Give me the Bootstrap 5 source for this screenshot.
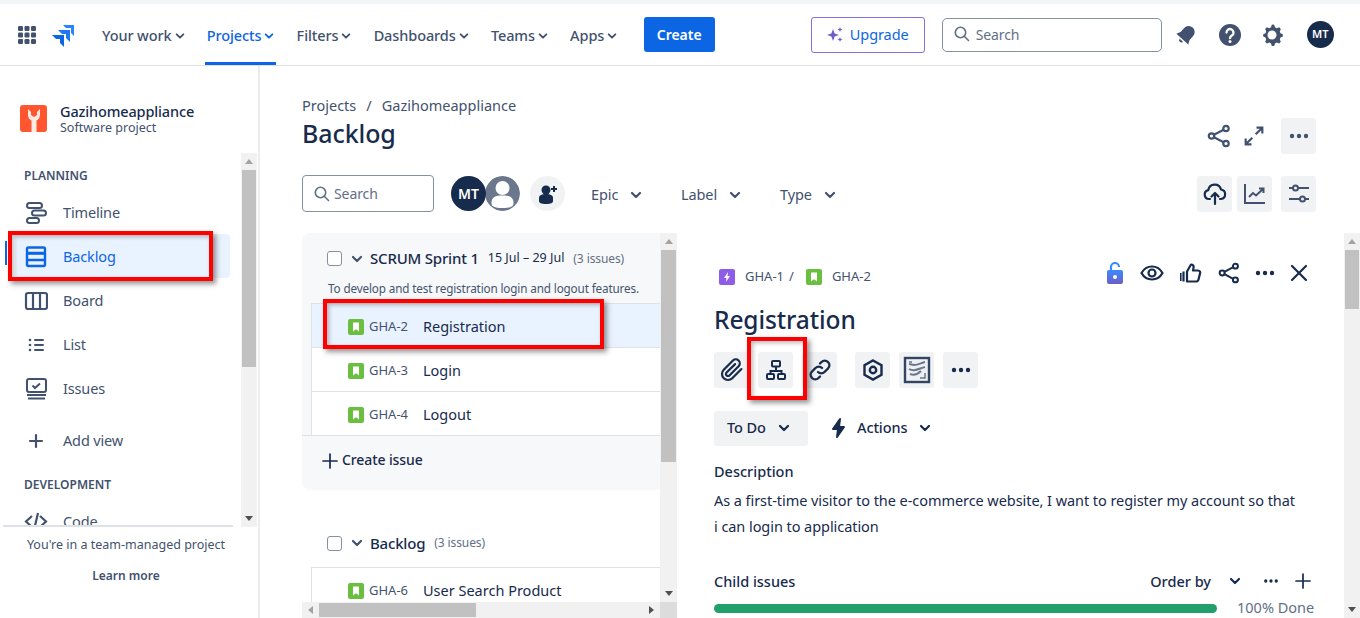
<!DOCTYPE html>
<html lang="en">
<head>
<meta charset="utf-8">
<title>Backlog</title>
<link href="https://cdn.jsdelivr.net/npm/bootstrap@5.3.0/dist/css/bootstrap.min.css" rel="stylesheet">
<style>
html,body{height:618px;overflow:hidden}
body{font-family:"Noto Sans","Open Sans",sans-serif;font-size:14px;color:#172b4d;letter-spacing:-.1px}
svg{display:block;flex:none}
.ico{width:24px;height:24px}
.i18{width:18px;height:18px}
.i12{width:12px;height:12px}
.i10{width:10px;height:10px}
.strip{height:4px;background:#f4f5f7}
.topbar{height:62px;border-bottom:1px solid #dfe1e6;background:#fff;color:#42526e;padding:0}
.t-apps{margin-left:16px}
.t-logo{margin:0 25px 0 13px}
.tnav{height:61px;padding:2px 2px 0;margin-right:18.2px;font-size:14.5px;font-weight:500;color:#42526e;white-space:nowrap;gap:3px;text-decoration:none}
.tnav.on{color:#0c66e4;border-bottom:3px solid #0c66e4;padding-top:5px}
.tcreate{background:#0c66e4;color:#fff;border-radius:3px;width:71px;height:35px;font-size:14px;font-weight:600;margin-left:6.3px;padding:0;border:0}
.tupgrade{width:114px;height:36px;border:1px solid #8270db;border-radius:3px;color:#0c66e4;background:#fff;font-size:14.5px;padding:0;margin-left:96px;gap:7px}
.tsearch{width:220px;height:34px;border:1px solid #8590a2;border-radius:5px;margin-left:17px;padding:0 0 1px 10px;gap:5px;color:#626f86}
.tbell{margin-left:12px}
.thelp{margin-left:20px}
.tgear{margin-left:18px}
.avatar{width:27px;height:27px;border-radius:50%;background:#172b4d;color:#fff;font-size:11px;font-weight:600;letter-spacing:0;margin-left:23px}
.body-wrap{height:552px}
.sidebar{width:260px;border-right:2px solid #ebecf0;flex:none}
.proj{height:87px;padding:36px 0 0 20px;gap:13px}
.proj-ico{width:27px;height:27px;border-radius:3px;background:#ff5630;margin-top:3px;overflow:hidden}
.proj-name{font-size:14.5px;font-weight:500;line-height:18px;letter-spacing:-.15px}
.proj-sub{font-size:12.5px;color:#42526e;line-height:15px;letter-spacing:0}
.side-mid{height:374px}
.side-list{width:241px;position:relative;overflow:hidden}
.side-list::after{content:"";position:absolute;left:3px;width:230px;bottom:0;height:2px;background:#dfe1e6}
.side-h{font-size:12px;font-weight:600;color:#42526e;line-height:16px;padding-left:24px;letter-spacing:0;margin-top:15px;margin-bottom:6px}
.sitem{width:215px;height:44px;margin-left:15px;padding:1px 0 0 9px;gap:15px;color:#42526e;border-radius:4px;position:relative;flex:none;font-size:14.5px;letter-spacing:-.15px}
.sitem.on{background:#e9f2ff;color:#0c66e4}
.sitem.on::before{content:"";position:absolute;left:-10px;top:7px;width:2px;height:24px;background:#0c66e4}
.sitem.gapt{margin-top:8px;margin-bottom:0}
.sb{background:#f1f1f1;flex:none}
.sb-v{width:16px;margin-right:1px}
.sb-up,.sb-down{height:17px;flex:none}
.sb-thumb{background:#c1c1c1;flex:none;margin:0 1px}
.sb-up::before{content:"";border:4px solid transparent;border-top:0;border-bottom:5px solid #a3a3a3}
.sb-down::before{content:"";border:4px solid transparent;border-bottom:0;border-top:5px solid #505050}
.th1{height:197px}.th2{height:212px}.th3{height:59px}
.side-foot{font-size:12.5px;color:#42526e;text-align:center;width:252px;padding-top:9px;letter-spacing:0}
.side-foot b{display:block;font-weight:600;font-size:12px;margin-top:12px}
.crumbs{padding:29px 0 0 42px;height:49px;color:#42526e;font-size:14.5px;line-height:21px;gap:10px;letter-spacing:0}
.title-row{height:38px;padding:0 44px 0 42px}
.ptitle{font-size:25px;font-weight:500;margin:0 0 2px;line-height:36px;letter-spacing:-.1px}
.title-acts{padding-top:4px}
.tile{width:35px;height:36px;background:#f1f2f4;border-radius:3px;color:#172b4d;flex:none}
.tile-s{color:#42526e}
.plain{background:none;color:#42526e}
.m5{margin-right:5px}
.m9{margin-right:9px}
.m10{margin-right:10px}
.filter-row{height:37px;margin-top:22px;padding:0 44px 0 42px}
.fsearch{width:132px;height:37px;border:1px solid #8590a2;border-radius:4px;padding-left:10px;gap:3px;color:#626f86}
.av-b{width:35px;height:35px;border-radius:50%;background:#172b4d;color:#fff;font-weight:600;font-size:14px;margin-left:17px;position:relative;z-index:1;letter-spacing:0}
.av-g{width:35px;height:35px;border-radius:50%;margin-left:-1px}
.av-add{width:35px;height:35px;border-radius:50%;background:#f1f2f4;margin-left:10px}
.fdrop{color:#42526e;font-size:14.5px;gap:12px;white-space:nowrap;padding-top:3px}
.fd-epic{margin-left:26px;width:90px}
.fd-label{width:99px}
.panels{height:385px;margin-top:21px}
.list-pane{width:375px;margin-left:42px;flex:none}
.list-top{height:369px}
.list-scroll{width:358px;overflow:hidden;flex:none}
.sprint{height:257px;background:#f7f8f9;border-radius:8px 0 0 8px}
.s-head{padding:7px 0 0 25px;height:44px;gap:9px;white-space:nowrap}
.cbox{width:15px;height:15px;border:1.5px solid #8590a2;border-radius:3px;background:#fff;flex:none}
.chv{color:#42526e}
.s-name{font-size:15px;font-weight:500;letter-spacing:-.2px;margin-left:-2px}
.s-date{font-size:12.5px;letter-spacing:0}
.s-count{font-size:12px;color:#626f86}
.s-desc{font-size:11.7px;color:#44546f;padding-left:26px;line-height:16px;margin-top:3px;height:23px;white-space:nowrap;letter-spacing:-.13px}
.irow{height:44px;margin-left:9px;border-left:1px solid #dfe1e6;border-top:1px solid #dfe1e6;background:#fff;padding:3px 0 0 36px;white-space:nowrap;font-size:14.5px;letter-spacing:0}
.irow.on{background:#e9f2ff}
.irows{border-bottom:1px solid #dfe1e6}
.ikey{font-size:13px;color:#44546f;margin:0 14px 0 5px;width:40px;letter-spacing:0}
.story{width:16px;height:16px;border-radius:2px;background:#6abf40;flex:none}
.epic{width:16px;height:16px;border-radius:2px;background:#8f5ce8;flex:none}
.s-create{padding:13px 0 0 20px;gap:4px;font-weight:500;font-size:14px;height:52px}
.plus-i{margin-top:4px}
.b-head{height:77px;padding:29px 0 0 25px;gap:9px}
.hbar-wrap{height:16px;background:#f1f1f1;width:358px;flex:none}
.hbar-corner{height:16px;width:17px;background:#dcdcdc;flex:none}
.sb-left,.sb-right{width:17px;flex:none}
.sb-left::before{content:"";border:4px solid transparent;border-left:0;border-right:5px solid #a3a3a3}
.sb-right::before{content:"";border:4px solid transparent;border-right:0;border-left:5px solid #505050}
.h-thumb{width:157px;background:#c1c1c1;flex:none;margin:1px 0}
.detail{width:683px;flex:none}
.d-main{width:667px;padding-left:37px;flex:none}
.d-top{height:70px;padding:10px 36px 0 5px;font-size:13px;color:#44546f;letter-spacing:0}
.dcrumb{margin-top:8px}
.k1{margin-left:10px}
.sl{margin:0 12px 0 5px}
.k2{margin-left:10px}
.d-acts{color:#172b4d;gap:16px}
.d-dots{margin:0 1px 0 -3px}
.d-x{margin-left:-4px}
.d-title{font-size:24.5px;font-weight:500;margin:0;line-height:34px;letter-spacing:-.1px}
.d-tools{margin-top:15px;height:36px;position:relative}
.d-tools .tile{margin-right:9px}
.d-tools .gap-l{margin-left:9px}
.status-row{margin-top:22px;height:36px;gap:21px;font-size:14.5px;font-weight:500}
.statusb{width:94px;height:35px;background:#f1f2f4;border-radius:3px;gap:12px;color:#172b4d;padding-left:13px}
.d-label{font-size:14.5px;font-weight:500;line-height:20px;letter-spacing:0}
.d-l1{margin-top:15px}
.desc{margin-top:6px;line-height:26px;font-size:14.5px;width:586px;letter-spacing:-.06px}
.child-row{margin-top:32px;height:20px;padding-right:33px}
.oc{margin-left:18px}
.od{margin-left:21px}
.op{margin-left:15px}
.progress-line{height:9px;width:503px;background:#22a06b;border-radius:5px}
.prog-row{gap:20px;margin-top:7px;color:#626f86;font-size:14.5px;height:20px;letter-spacing:0}
.hl{position:absolute;border:4px solid #f00;box-shadow:3px 3px 5px rgba(60,60,60,.55),inset 2px 2px 4px rgba(60,60,60,.35);pointer-events:none;z-index:3}
.hl-a{left:-7px;top:-3px;width:205px;height:50px}
.hl-b{left:11px;top:-5px;width:281px;height:50px}
.hl-c{left:33px;top:-15px;width:60px;height:63px}
</style>
</head>
<body>
<svg width="0" height="0" class="position-absolute">
<defs>
<symbol id="chev" viewBox="0 0 12 12"><path d="M2 4l4 4 4-4" fill="none" stroke="currentColor" stroke-width="2.2" stroke-linecap="round" stroke-linejoin="round"/></symbol>
<symbol id="search" viewBox="0 0 18 18"><circle cx="7.5" cy="7.5" r="5.2" fill="none" stroke="currentColor" stroke-width="1.6"/><path d="M11.5 11.5l4 4" stroke="currentColor" stroke-width="1.6" stroke-linecap="round"/></symbol>
<symbol id="dots" viewBox="0 0 24 24"><circle cx="5" cy="12" r="2.2" fill="currentColor"/><circle cx="12" cy="12" r="2.2" fill="currentColor"/><circle cx="19" cy="12" r="2.2" fill="currentColor"/></symbol>
<symbol id="share" viewBox="0 0 24 24"><g fill="none" stroke="currentColor" stroke-width="2.2"><circle cx="19" cy="4.5" r="2.7"/><circle cx="19" cy="19.5" r="2.7"/><circle cx="4.5" cy="12" r="2.7"/><path d="M7 10.7l9.6-5M7 13.3l9.6 5"/></g></symbol>
<symbol id="plus" viewBox="0 0 16 16"><path d="M8 1v14M1 8h14" stroke="currentColor" stroke-width="1.7" stroke-linecap="round"/></symbol>
<symbol id="book" viewBox="0 0 16 16"><path d="M5 3.5h6v9L8 10.2 5 12.5z" fill="#fff"/></symbol>
</defs>
</svg>

<div class="strip"></div>

<nav class="topbar d-flex align-items-center">
  <div class="d-flex align-items-center">
    <svg class="t-apps" width="22" height="22" viewBox="0 0 22 22" fill="#42526e"><rect x="2" y="2" width="5" height="5" rx="1.2"/><rect x="8.5" y="2" width="5" height="5" rx="1.2"/><rect x="15" y="2" width="5" height="5" rx="1.2"/><rect x="2" y="8.5" width="5" height="5" rx="1.2"/><rect x="8.5" y="8.5" width="5" height="5" rx="1.2"/><rect x="15" y="8.5" width="5" height="5" rx="1.2"/><rect x="2" y="15" width="5" height="5" rx="1.2"/><rect x="8.5" y="15" width="5" height="5" rx="1.2"/><rect x="15" y="15" width="5" height="5" rx="1.2"/></svg>
    <svg class="t-logo" width="24" height="24" viewBox="0 0 24 24"><path d="M12 2h11v11l-3-3v-5h-5z" fill="#2684ff"/><path d="M7 7h12v12l-4-4V11h-4z" fill="#1f78f0"/><path d="M1 12h12v12l-4-4v-4H5z" fill="#0c66e4"/></svg>
    <a class="tnav d-flex align-items-center">Your work <svg class="i10"><use href="#chev"/></svg></a>
    <a class="tnav on d-flex align-items-center">Projects <svg class="i10"><use href="#chev"/></svg></a>
    <a class="tnav d-flex align-items-center">Filters <svg class="i10"><use href="#chev"/></svg></a>
    <a class="tnav d-flex align-items-center">Dashboards <svg class="i10"><use href="#chev"/></svg></a>
    <a class="tnav d-flex align-items-center">Teams <svg class="i10"><use href="#chev"/></svg></a>
    <a class="tnav d-flex align-items-center">Apps <svg class="i10"><use href="#chev"/></svg></a>
    <button class="btn tcreate">Create</button>
  </div>
  <div class="d-flex align-items-center">
    <div class="tupgrade d-flex align-items-center justify-content-center">
      <svg width="16" height="16" viewBox="0 0 16 16" fill="#6e5dc6"><path d="M6 2l1.6 4.4L12 8l-4.4 1.6L6 14 4.4 9.6 0 8l4.4-1.6z"/><path d="M13 0l.7 1.8 1.8.7-1.8.7-.7 1.8-.7-1.8-1.8-.7 1.8-.7zM13 10l.7 1.800 1.800.7-1.800.7-.7 1.800-.7-1.800-1.800-.7 1.800-.7z"/></svg>
      <span>Upgrade</span>
    </div>
    <div class="tsearch d-flex align-items-center"><svg class="i18"><use href="#search"/></svg><span>Search</span></div>
    <svg class="tbell" width="24" height="24" viewBox="0 0 24 24" fill="#42526e"><g transform="rotate(42 12 12)"><path d="M12 2a6 6 0 0 0-6 6v5.500L4 17.500h16l-2-4V8a6 6 0 0 0-6-6z"/><path d="M9.800 19a2.200 2.200 0 0 0 4.400 0z"/></g></svg>
    <svg class="thelp" width="24" height="24" viewBox="0 0 24 24"><circle cx="12" cy="12" r="11" fill="#42526e"/><path d="M8.500 9.500a3.500 3.500 0 1 1 5.500 2.900c-1.300.9-2 1.300-2 2.800" fill="none" stroke="#fff" stroke-width="2.300" stroke-linecap="round"/><circle cx="12" cy="18.500" r="1.500" fill="#fff"/></svg>
    <svg class="tgear" width="24" height="24" viewBox="0 0 24 24"><path d="M12 2.500l2.200.300.800 2.500 1.700.900 2.500-.9 1.600 1.700-1 2.400.7 1.800 2.300 1v2.400l-2.300 1-.7 1.800 1 2.400-1.600 1.700-2.500-.9-1.700.9-.8 2.400h-2.400l-.8-2.400-1.700-.9-2.500.9-1.600-1.700 1-2.400-.7-1.800-2.300-1v-2.400l2.300-1 .7-1.800-1-2.400 1.600-1.700 2.500.9 1.700-.9.800-2.500z" fill="#42526e" transform="translate(0 -1)"/><circle cx="12" cy="12" r="4.500" fill="#fff"/></svg>
    <div class="avatar d-flex align-items-center justify-content-center">MT</div>
  </div>
</nav>

<div class="body-wrap d-flex">
  <aside class="sidebar d-flex flex-column">
    <div class="proj d-flex">
      <div class="proj-ico d-flex align-items-end justify-content-center">
        <svg width="20" height="25" viewBox="0 0 20 25"><path d="M4 2v6c0 3 2 5 3.500 5.500V25h5V13.500C14 13 16 11 16 8V2l-3 3v3l-3 2-3-2V5z" fill="#ffeae4"/></svg>
      </div>
      <div><div class="proj-name">Gazihomeappliance</div><div class="proj-sub">Software project</div></div>
    </div>
    <div class="side-mid d-flex">
      <div class="side-list d-flex flex-column">
        <div class="side-h">PLANNING</div>
        <div class="sitem d-flex align-items-center">
          <svg class="ico" viewBox="0 0 24 24" fill="none" stroke="currentColor" stroke-width="2"><rect x="3" y="2" width="15" height="5" rx="2.500"/><rect x="8" y="9.500" width="14" height="5" rx="2.500"/><rect x="3" y="17" width="12" height="5" rx="2.500"/></svg>Timeline
        </div>
        <div class="sitem on d-flex align-items-center">
          <svg class="ico" viewBox="0 0 24 24" fill="none" stroke="currentColor" stroke-width="2.400"><rect x="3" y="2.500" width="18" height="5.500" rx="1.500"/><path d="M3 8.500h19M3 15h19"/><path d="M3 8v11.500A1.500 1.500 0 0 0 4.500 21h15a1.500 1.500 0 0 0 1.500-1.500V8"/></svg>Backlog
          <div class="hl hl-a"></div>
        </div>
        <div class="sitem d-flex align-items-center">
          <svg class="ico" viewBox="0 0 24 24" fill="none" stroke="currentColor" stroke-width="2.200"><rect x="2" y="4" width="21" height="16" rx="2"/><path d="M9 4v16M16 4v16"/></svg>Board
        </div>
        <div class="sitem d-flex align-items-center">
          <svg class="ico" viewBox="0 0 24 24" fill="currentColor"><rect x="10" y="6" width="10" height="2" rx="1"/><rect x="10" y="11" width="10" height="2" rx="1"/><rect x="10" y="16" width="10" height="2" rx="1"/><circle cx="6" cy="7" r="1.300"/><circle cx="6" cy="12" r="1.300"/><circle cx="6" cy="17" r="1.300"/></svg>List
        </div>
        <div class="sitem d-flex align-items-center">
          <svg class="ico" viewBox="0 0 24 24" fill="none" stroke="currentColor" stroke-width="2"><rect x="3" y="2" width="19" height="13" rx="2"/><path d="M8.500 8.500l2.500 2.500 5-4.500M3 18h19M4 21.500h17"/></svg>Issues
        </div>
        <div class="sitem gapt d-flex align-items-center">
          <svg class="ico" viewBox="0 0 24 24"><path d="M12 6v12M6 12h12" stroke="currentColor" stroke-width="2.200" stroke-linecap="round"/></svg>Add view
        </div>
        <div class="side-h">DEVELOPMENT</div>
        <div class="sitem d-flex align-items-center">
          <svg class="ico" viewBox="0 0 24 24" fill="none" stroke="currentColor" stroke-width="2.200"><path d="M8 6l-6 5.500L8 17M16 6l6 5.500L16 17M14 3L10 20"/></svg>Code
        </div>
      </div>
      <div class="sb sb-v d-flex flex-column">
        <div class="sb-up d-flex align-items-center justify-content-center"></div>
        <div class="sb-thumb th1"></div>
        <div class="flex-grow-1"></div>
        <div class="sb-down d-flex align-items-center justify-content-center"></div>
      </div>
    </div>
    <div class="side-foot">You're in a team-managed project<b>Learn more</b></div>
  </aside>

  <main class="flex-grow-1 d-flex flex-column">
    <div class="crumbs d-flex"><span>Projects</span><span>/</span><span>Gazihomeappliance</span></div>
    <div class="title-row d-flex justify-content-between align-items-center">
      <h1 class="ptitle">Backlog</h1>
      <div class="title-acts d-flex align-items-center">
        <div class="tile plain d-flex align-items-center justify-content-center"><svg width="24" height="24"><use href="#share"/></svg></div>
        <div class="tile plain m10 d-flex align-items-center justify-content-center"><svg width="20" height="20" viewBox="0 0 24 24" fill="none" stroke="currentColor" stroke-width="2.600"><path d="M14 10l8-8M15 2h7v7M10 14l-8 8M2 15v7h7"/></svg></div>
        <div class="tile tile-s d-flex align-items-center justify-content-center"><svg class="ico"><use href="#dots"/></svg></div>
      </div>
    </div>
    <div class="filter-row d-flex align-items-center">
      <div class="fsearch d-flex align-items-center"><svg class="i18"><use href="#search"/></svg><span>Search</span></div>
      <div class="av-b d-flex align-items-center justify-content-center">MT</div>
      <svg class="av-g" viewBox="0 0 35 35"><circle cx="17.500" cy="17.500" r="17.500" fill="#6b778c"/><circle cx="17.500" cy="12" r="7" fill="#fff"/><path d="M6.500 27c0-6 4-7.500 11-7.500s11 1.500 11 7.500c0 3.500-2.500 5-11 5s-11-1.500-11-5z" fill="#fff"/></svg>
      <div class="av-add d-flex align-items-center justify-content-center"><svg width="24" height="24" viewBox="0 0 24 24" fill="#172b4d"><circle cx="10" cy="8" r="4.500"/><path d="M3 16c0-3 3-4 7-4s7 1 7 4v3c0 2-2 3-7 3s-7-1-7-3z"/><path d="M18 4v6M15 7h6" stroke="#172b4d" stroke-width="2"/></svg></div>
      <div class="fdrop fd-epic d-flex align-items-center">Epic <svg class="i12"><use href="#chev"/></svg></div>
      <div class="fdrop fd-label d-flex align-items-center">Label <svg class="i12"><use href="#chev"/></svg></div>
      <div class="fdrop d-flex align-items-center">Type <svg class="i12"><use href="#chev"/></svg></div>
      <div class="ms-auto d-flex">
        <div class="tile m5 d-flex align-items-center justify-content-center"><svg class="ico" viewBox="0 0 24 24" fill="none" stroke="currentColor" stroke-width="2.200" stroke-linecap="round" stroke-linejoin="round"><path d="M7 17H6a4.500 4.500 0 0 1-.7-8.900A6.500 6.500 0 0 1 18 7.500a4.800 4.800 0 0 1 0 9.500h-1"/><path d="M12 22V11M8.500 14.500L12 11l3.500 3.500"/></svg></div>
        <div class="tile tile-s m9 d-flex align-items-center justify-content-center"><svg class="ico" viewBox="0 0 24 24" fill="none" stroke="currentColor" stroke-width="2"><path d="M2 2v19h20"/><path d="M6 15l4-4 3 2.500L20 7M16 6.500h4.500V11"/></svg></div>
        <div class="tile tile-s d-flex align-items-center justify-content-center"><svg class="ico" viewBox="0 0 24 24" fill="none" stroke="currentColor" stroke-width="2"><path d="M2 6h4M11 6h11M2 17h11M18 17h4"/><circle cx="8.500" cy="6" r="2.500"/><circle cx="15.500" cy="17" r="2.500"/></svg></div>
      </div>
    </div>

    <div class="panels d-flex">
      <section class="list-pane d-flex flex-column">
        <div class="list-top d-flex">
          <div class="list-scroll">
            <div class="sprint">
              <div class="s-head d-flex align-items-center">
                <span class="cbox"></span>
                <svg class="i12 chv"><use href="#chev"/></svg>
                <span class="s-name">SCRUM Sprint 1</span>
                <span class="s-date">15 Jul – 29 Jul</span>
                <span class="s-count">(3 issues)</span>
              </div>
              <div class="s-desc">To develop and test registration login and logout features.</div>
              <div class="irows">
                <div class="irow on d-flex align-items-center position-relative"><span class="story"><svg width="16" height="16"><use href="#book"/></svg></span><span class="ikey">GHA-2</span>Registration<div class="hl hl-b"></div></div>
                <div class="irow d-flex align-items-center"><span class="story"><svg width="16" height="16"><use href="#book"/></svg></span><span class="ikey">GHA-3</span>Login</div>
                <div class="irow d-flex align-items-center"><span class="story"><svg width="16" height="16"><use href="#book"/></svg></span><span class="ikey">GHA-4</span>Logout</div>
              </div>
              <div class="s-create d-flex align-items-start"><svg width="16" height="16" class="plus-i"><use href="#plus"/></svg><span>Create issue</span></div>
            </div>
            <div class="b-head d-flex align-items-center">
              <span class="cbox"></span>
              <svg class="i12 chv"><use href="#chev"/></svg>
              <span class="s-name">Backlog</span>
              <span class="s-count">(3 issues)</span>
            </div>
            <div class="irow d-flex align-items-center"><span class="story"><svg width="16" height="16"><use href="#book"/></svg></span><span class="ikey">GHA-6</span>User Search Product</div>
          </div>
          <div class="sb d-flex flex-column flex-grow-1">
            <div class="sb-up d-flex align-items-center justify-content-center"></div>
            <div class="sb-thumb th2"></div>
            <div class="flex-grow-1"></div>
            <div class="sb-down d-flex align-items-center justify-content-center"></div>
          </div>
        </div>
        <div class="d-flex">
          <div class="hbar-wrap d-flex">
            <div class="sb-left d-flex align-items-center justify-content-center"></div>
            <div class="h-thumb"></div>
            <div class="flex-grow-1"></div>
            <div class="sb-right d-flex align-items-center justify-content-center"></div>
          </div>
          <div class="hbar-corner"></div>
        </div>
      </section>

      <section class="detail d-flex">
        <div class="d-main">
          <div class="d-top d-flex align-items-center">
            <div class="dcrumb d-flex align-items-center">
              <span class="epic d-flex align-items-center justify-content-center"><svg width="12" height="12" viewBox="0 0 12 12"><path d="M7 1L3 7h2.500L5 11l4-6H6.500z" fill="#fff"/></svg></span>
              <span class="k1">GHA-1</span><span class="sl">/</span>
              <span class="story"><svg width="16" height="16"><use href="#book"/></svg></span>
              <span class="k2">GHA-2</span>
            </div>
            <div class="d-acts ms-auto d-flex align-items-center">
              <svg width="18" height="24" viewBox="0 0 18 24"><defs><linearGradient id="lg" x1="0" y1="0" x2="0" y2="1"><stop offset="0" stop-color="#388bff"/><stop offset="1" stop-color="#6e5dc6"/></linearGradient></defs><rect x="1" y="9" width="16" height="14" rx="2" fill="url(#lg)"/><path d="M5 10V6a4 4 0 0 1 8 0" fill="none" stroke="#388bff" stroke-width="2.200"/><circle cx="9" cy="16" r="2" fill="#fff"/></svg>
              <svg width="24" height="24" viewBox="0 0 24 24" fill="none" stroke="currentColor" stroke-width="2.200"><path d="M1.500 12C4 7.500 8 5.500 12 5.500S20 7.500 22.500 12C20 16.500 16 18.500 12 18.500S4 16.500 1.500 12z"/><circle cx="12" cy="12" r="3.500"/></svg>
              <svg width="22" height="24" viewBox="0 0 22 24" fill="none" stroke="currentColor" stroke-width="2.200" stroke-linejoin="round"><path d="M7 10.500l4-7c2 0 3 1.500 2.500 3.500L13 9.500h5c2 0 2.500 1.500 2 3l-1.500 6c-.3 1.300-1 2-2.500 2H7zM3.500 10.500v10M.500 12v8"/></svg>
              <svg width="22" height="22"><use href="#share"/></svg>
              <svg class="d-dots" width="24" height="24"><use href="#dots"/></svg>
              <svg class="i18 d-x" viewBox="0 0 18 18"><path d="M2 2l14 14M16 2L2 16" stroke="currentColor" stroke-width="2.200" stroke-linecap="round"/></svg>
            </div>
          </div>
          <h2 class="d-title">Registration</h2>
          <div class="d-tools d-flex">
            <div class="tile d-flex align-items-center justify-content-center"><svg class="ico" viewBox="0 0 24 24" fill="none" stroke="currentColor" stroke-width="2.200" stroke-linecap="round" stroke-linejoin="round"><path d="M21.440 11.050l-9.190 9.190a6 6 0 0 1-8.490-8.490l9.190-9.190a4 4 0 0 1 5.660 5.660l-9.200 9.190a2 2 0 0 1-2.830-2.830l8.490-8.480"/></svg></div>
            <div class="tile d-flex align-items-center justify-content-center"><svg class="ico" viewBox="0 0 24 24" fill="none" stroke="currentColor" stroke-width="2"><rect x="8" y="3" width="8" height="5.500" rx="1"/><rect x="3" y="16" width="7" height="5" rx="1"/><rect x="14" y="16" width="7" height="5" rx="1"/><path d="M12 8.500V13M6.500 16v-3h11v3"/></svg></div>
            <div class="tile d-flex align-items-center justify-content-center"><svg class="ico" viewBox="0 0 24 24" fill="none" stroke="currentColor" stroke-width="2.400" stroke-linecap="round"><path d="M10 14a4.500 4.500 0 0 0 6.500 0l3.500-3.500a4.500 4.500 0 0 0-6.500-6.500l-1.500 1.500"/><path d="M14 10a4.500 4.500 0 0 0-6.500 0L4 13.500a4.500 4.500 0 0 0 6.500 6.500l1.500-1.500"/></svg></div>
            <div class="tile gap-l d-flex align-items-center justify-content-center"><svg class="ico" viewBox="0 0 24 24" fill="none" stroke="currentColor" stroke-width="2.400"><path d="M12 2.500l8.500 4.800v9.400L12 21.500l-8.500-4.800V7.300z"/><circle cx="12" cy="12" r="3.200"/></svg></div>
            <div class="tile d-flex align-items-center justify-content-center"><svg width="30" height="30" viewBox="0 0 30 30"><rect x="3" y="3" width="24" height="24" fill="#eef0f3" stroke="#344563" stroke-width="2.400"/><path d="M7 9l5 1c4 0 7-2 11-3M7 14c5 3 9 0 16-2M8 19c5 2 8 0 11-3" fill="none" stroke="#6b778c" stroke-width="2"/><path d="M18 23h5v-5M7 7h3" fill="none" stroke="#6b778c" stroke-width="1.500"/></svg></div>
            <div class="tile d-flex align-items-center justify-content-center"><svg class="ico"><use href="#dots"/></svg></div>
            <div class="hl hl-c"></div>
          </div>
          <div class="status-row d-flex align-items-center">
            <div class="statusb d-flex align-items-center">To Do <svg class="i12"><use href="#chev"/></svg></div>
            <div class="d-flex align-items-center gap-2">
              <svg width="20" height="22" viewBox="0 0 20 22" fill="#172b4d" stroke="#172b4d" stroke-width="2" stroke-linejoin="round"><path d="M11 2L4 12h5l-1 8 7-10h-5z"/></svg>
              <span>Actions</span><svg class="i12 ms-1"><use href="#chev"/></svg>
            </div>
          </div>
          <div class="d-label d-l1">Description</div>
          <div class="desc">As a first-time visitor to the e-commerce website, I want to register my account so that i can login to application</div>
          <div class="child-row d-flex justify-content-between align-items-center">
            <div class="d-label">Child issues</div>
            <div class="d-flex align-items-center">
              <span class="d-label">Order by</span>
              <svg class="i12 oc"><use href="#chev"/></svg>
              <svg class="od" width="18" height="18"><use href="#dots"/></svg>
              <svg class="op" width="16" height="16"><use href="#plus"/></svg>
            </div>
          </div>
          <div class="prog-row d-flex align-items-center"><div class="progress-line"></div><span>100% Done</span></div>
        </div>
        <div class="sb flex-grow-1 d-flex flex-column">
          <div class="sb-up d-flex align-items-center justify-content-center"></div>
          <div class="sb-thumb th3"></div>
          <div class="flex-grow-1"></div>
          <div class="sb-down d-flex align-items-center justify-content-center"></div>
        </div>
      </section>
    </div>
  </main>
</div>
<script src="https://cdn.jsdelivr.net/npm/bootstrap@5.3.0/dist/js/bootstrap.bundle.min.js"></script>
</body>
</html>
